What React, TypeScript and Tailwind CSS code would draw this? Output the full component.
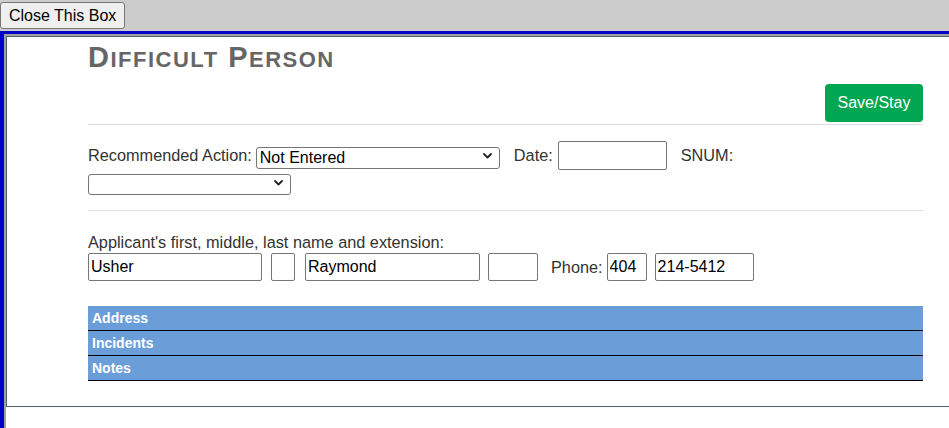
import React from "react";

function Chevron() {
  return (
    <svg
      className="pointer-events-none absolute right-[8px] top-1/2 -translate-y-1/2"
      width="9"
      height="6"
      viewBox="0 0 9 6"
      fill="none"
    >
      <path d="M1 1l3.5 3.5L8 1" stroke="#222" strokeWidth="1.8" strokeLinecap="round" strokeLinejoin="round" />
    </svg>
  );
}

function Select({ width, height, value }: { width: string; height: string; value: string }) {
  return (
    <div className={`relative ${width} ${height}`}>
      <select
        defaultValue={value}
        className="h-full w-full appearance-none rounded-[3px] border border-[#767676] bg-white pl-[3px] pr-6 text-[16px] leading-none text-black outline-none"
      >
        <option value={value}>{value}</option>
      </select>
      <Chevron />
    </div>
  );
}

function TextBox({ width, value = "" }: { width: string; value?: string }) {
  return (
    <input
      type="text"
      defaultValue={value}
      className={`${width} h-[28px] rounded-[2px] border border-[#767676] bg-white px-[2px] text-[16px] text-black outline-none`}
    />
  );
}

function Bar({ label }: { label: string }) {
  return (
    <div className="flex h-[25px] items-center border-b border-black bg-[#6b9ed8] pl-[4px] text-[14px] font-bold text-white">
      {label}
    </div>
  );
}

export default function App() {
  return (
    <div className="min-h-[428px] bg-[#cccccc] font-['Liberation_Sans',Arial,sans-serif]">
      <div className="h-[31px] pt-[2px]">
        <button className="h-[27px] rounded-[3px] border border-[#767676] bg-[#efefef] px-[8px] text-[16px] leading-none text-black">
          Close This Box
        </button>
      </div>

      <div className="border-l-[4px] border-t-[3px] border-[#0000c8]">
        <div className="min-h-[394px] border-l-2 border-t-2 border-[#a0a0a0] bg-white">
          <div className="border-b border-l border-t border-[#4b6478] pb-[25px] pl-[81px]">
            <div className="w-[835px]">
              <h1 className="h-[36px] pt-[4px] text-[29px] font-bold uppercase leading-[32px] tracking-[1.5px] text-[#666666]">
                D<span className="text-[22px] leading-none">ifficult</span> P
                <span className="text-[22px] leading-none">erson</span>
              </h1>

              <div className="mt-[11px] flex justify-end">
                <button className="h-[38px] w-[98px] rounded-[4px] bg-[#00a651] text-[16px] text-white">
                  Save/Stay
                </button>
              </div>

              <div className="mt-[2px] h-px bg-[#dedede]" />

              <div className="mt-[16px] flex h-[29px] items-center text-[16.3px] text-[#333333]">
                <span>Recommended Action:</span>
                <div className="ml-[4px]">
                  <Select width="w-[244px]" height="h-[22px]" value="Not Entered" />
                </div>
                <span className="ml-[14px]">Date:</span>
                <input
                  type="text"
                  className="ml-[5px] h-[29px] w-[109px] rounded-[2px] border border-[#767676] bg-white px-[2px] text-[16px] outline-none"
                />
                <span className="ml-[14px]">SNUM:</span>
              </div>
              <div className="mt-[2px]">
                <Select width="w-[203px]" height="h-[21px]" value="" />
              </div>

              <div className="mt-[17px] h-px bg-[#dedede]" />

              <div className="mt-[22px] text-[16.3px] leading-[19px] text-[#333333]">
                Applicant's first, middle, last name and extension:
              </div>
              <div className="mt-px flex items-center text-[16.3px] text-[#333333]">
                <TextBox width="w-[174px]" value="Usher" />
                <div className="ml-[9px]">
                  <TextBox width="w-[24px]" />
                </div>
                <div className="ml-[10px]">
                  <TextBox width="w-[175px]" value="Raymond" />
                </div>
                <div className="ml-[8px]">
                  <TextBox width="w-[50px]" />
                </div>
                <span className="ml-[13px]">Phone:</span>
                <div className="ml-[4px]">
                  <TextBox width="w-[40px]" value="404" />
                </div>
                <div className="ml-[8px]">
                  <TextBox width="w-[99px]" value="214-5412" />
                </div>
              </div>

              <div className="mt-[25px]">
                <Bar label="Address" />
                <Bar label="Incidents" />
                <Bar label="Notes" />
              </div>
            </div>
          </div>
        </div>
      </div>
    </div>
  );
}
